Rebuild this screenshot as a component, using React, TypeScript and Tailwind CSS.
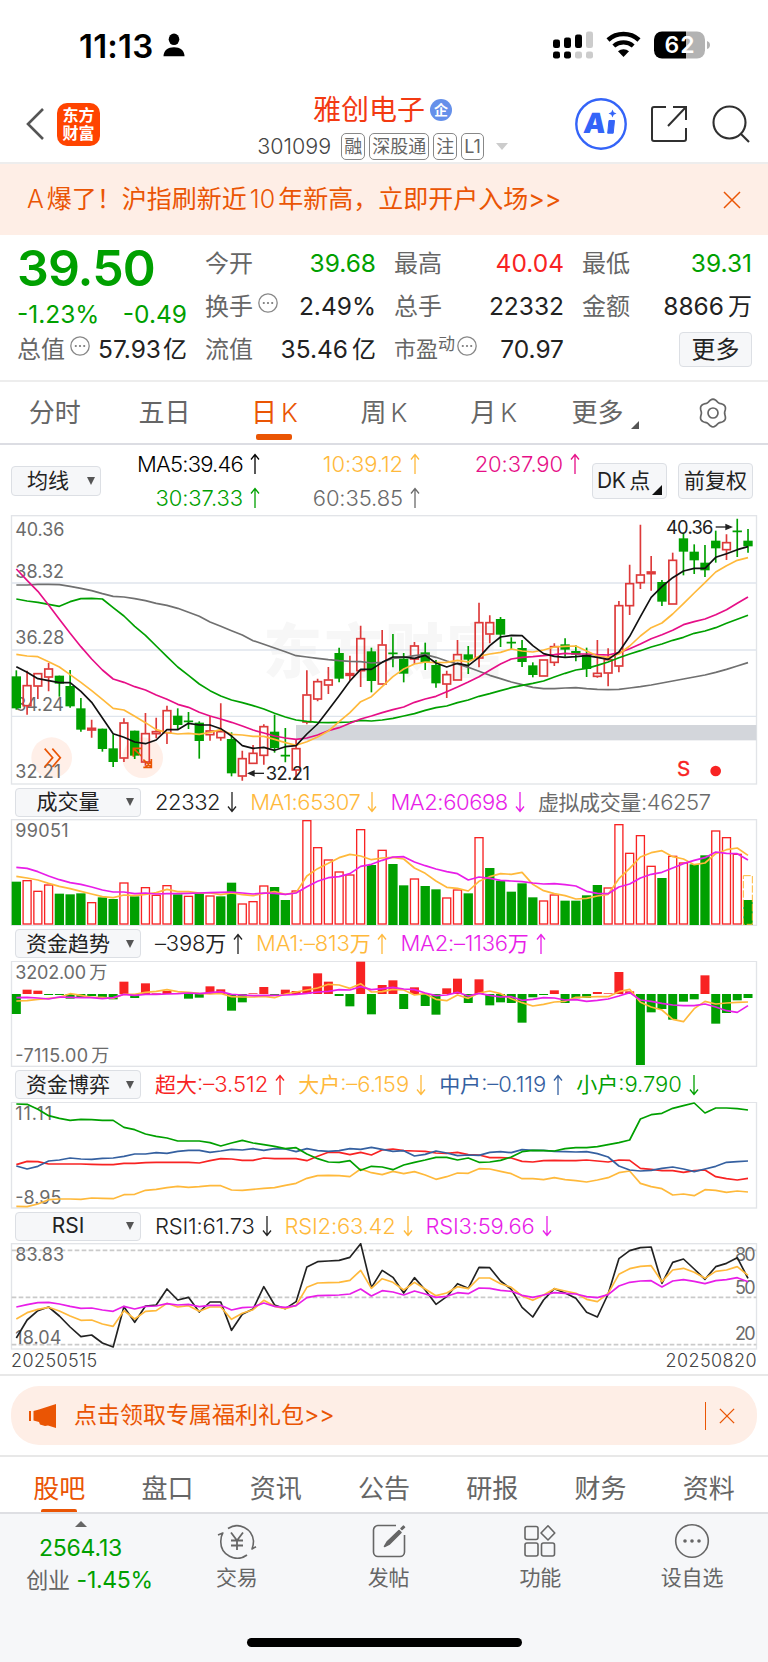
import type { ReactNode } from "react";
import clsx from "clsx";

type Candle = [dir: "r" | "g" | "x", top: number, bottom: number, high: number, low: number];

const UP = "#dd3a3a";
const DOWN = "#00a000";
const RED = "#f82323";
const YELLOW = "#ffb93b";
const MAGENTA = "#e81ee8";
const PINK = "#e60f87";
const GRAY = "#6b6b6b";
const BLUE = "#3560a0";

// chart drawings use three units per pixel
const X0 = 49;
const STEP = 32.28;
const px = (i: number) => X0 + i * STEP;

const candles: Candle[] = [
  ["g", 529, 625, 511, 629], ["r", 556, 618, 512, 644], ["r", 520, 559, 520, 597], ["r", 506, 532, 489, 574],
  ["g", 527, 551, 527, 590], ["g", 558, 619, 510, 623], ["g", 625, 689, 594, 695], ["r", 684, 691, 659, 713],
  ["g", 686, 747, 686, 755], ["g", 745, 786, 703, 801], ["r", 668, 775, 655, 786], ["g", 692, 767, 692, 777],
  ["r", 700, 787, 639, 797], ["r", 694, 702, 653, 715], ["r", 631, 699, 617, 732], ["g", 647, 675, 625, 690],
  ["x", 664, 664, 636, 687], ["g", 668, 723, 664, 776], ["r", 692, 705, 647, 722], ["r", 694, 714, 610, 722],
  ["g", 717, 820, 697, 829], ["r", 775, 829, 752, 842], ["r", 759, 791, 735, 791], ["r", 679, 767, 673, 794],
  ["g", 695, 744, 644, 758], ["x", 767, 767, 684, 787], ["r", 745, 811, 720, 838], ["r", 584, 667, 511, 673],
  ["r", 544, 598, 536, 604], ["r", 539, 556, 501, 582], ["g", 459, 536, 443, 547], ["r", 520, 527, 467, 542],
  ["r", 415, 513, 377, 561], ["g", 454, 543, 443, 577], ["r", 434, 553, 390, 553], ["x", 460, 460, 402, 502],
  ["g", 476, 521, 459, 547], ["r", 437, 478, 426, 492], ["g", 457, 486, 428, 510], ["g", 495, 550, 480, 563],
  ["r", 523, 553, 512, 594], ["r", 463, 541, 420, 541], ["g", 463, 479, 438, 522], ["r", 367, 475, 308, 502],
  ["r", 367, 403, 346, 430], ["g", 357, 404, 351, 441], ["x", 428, 428, 412, 447], ["g", 444, 486, 420, 501],
  ["g", 496, 525, 487, 532], ["r", 479, 529, 479, 529], ["r", 439, 488, 430, 498], ["g", 433, 449, 415, 470],
  ["g", 453, 464, 436, 484], ["g", 464, 507, 443, 531], ["r", 519, 530, 420, 533], ["r", 478, 520, 445, 559],
  ["r", 316, 499, 303, 517], ["r", 250, 318, 194, 345], ["r", 224, 249, 74, 267], ["r", 215, 222, 168, 272],
  ["g", 246, 305, 240, 318], ["r", 180, 313, 158, 313], ["g", 115, 155, 98, 226], ["g", 155, 181, 133, 222],
  ["g", 188, 211, 135, 231], ["g", 122, 145, 92, 188], ["r", 127, 150, 103, 180], ["x", 94, 94, 56, 171],
  ["g", 122, 139, 87, 158],
];

const ma5 = [500, 517, 536, 542, 548, 548, 574, 607, 654, 701, 712, 726, 731, 720, 689, 689, 670, 675, 675, 686, 708, 737, 745, 742, 751, 740, 737, 702, 672, 630, 587, 543, 508, 508, 487, 471, 471, 475, 466, 489, 501, 490, 497, 472, 437, 411, 406, 407, 437, 461, 469, 472, 470, 467, 472, 478, 456, 409, 350, 292, 260, 233, 213, 205, 205, 172, 161, 149, 140];
const ma10 = [463, 468, 470, 485, 501, 524, 547, 572, 598, 625, 630, 649, 668, 689, 698, 702, 700, 703, 697, 689, 703, 705, 709, 709, 718, 728, 736, 725, 711, 693, 665, 638, 605, 590, 560, 530, 507, 492, 486, 488, 487, 481, 486, 469, 462, 457, 447, 453, 456, 450, 441, 439, 438, 453, 468, 472, 462, 438, 408, 383, 369, 342, 311, 279, 248, 216, 197, 181, 173];
const ma20 = [207, 241, 274, 315, 358, 400, 440, 477, 510, 537, 547, 560, 570, 585, 598, 613, 622, 637, 648, 657, 667, 678, 690, 699, 708, 714, 718, 714, 705, 692, 683, 670, 657, 648, 638, 629, 621, 607, 597, 589, 575, 561, 546, 530, 511, 492, 477, 472, 470, 467, 464, 460, 462, 462, 464, 465, 458, 446, 432, 416, 404, 391, 374, 365, 357, 344, 329, 310, 291];
const ma30 = [297, 303, 307, 313, 319, 305, 296, 295, 297, 323, 348, 379, 406, 438, 470, 501, 526, 552, 572, 588, 600, 608, 617, 627, 640, 651, 660, 664, 667, 668, 667, 666, 661, 663, 660, 655, 648, 641, 631, 623, 618, 608, 600, 589, 581, 572, 563, 556, 550, 543, 531, 520, 510, 505, 496, 486, 473, 462, 452, 441, 432, 421, 412, 400, 393, 383, 370, 358, 346];
const ma60 = [255, 255, 253, 253, 254, 259, 265, 272, 281, 289, 291, 296, 302, 310, 316, 325, 337, 349, 366, 379, 392, 405, 422, 433, 444, 455, 467, 471, 475, 479, 482, 484, 485, 489, 487, 475, 472, 467, 464, 472, 483, 492, 502, 514, 526, 536, 546, 554, 562, 566, 566, 564, 563, 566, 568, 569, 568, 564, 560, 555, 549, 543, 537, 531, 525, 517, 508, 498, 488];

const volume = "g305 r301 r333 r314 g341 g343 g340 r367 g352 g357 r308 g349 r322 r345 r316 g343 r348 g340 r347 g349 g308 r371 r364 r317 g321 g360 r332 r121 r202 r239 r275 r284 r148 g255 r210 g252 g316 r296 g318 g328 r353 r329 g340 r172 g264 g302 g335 g310 g352 r362 r344 g362 g362 g346 g315 r323 r133 r219 r166 r258 g294 r228 r248 g253 g226 r152 r172 r222 g360".split(" ");
const volMa1 = [289, 294, 300, 310, 319, 326, 334, 342, 350, 353, 345, 347, 343, 338, 328, 335, 335, 339, 339, 344, 339, 344, 347, 340, 335, 343, 338, 288, 266, 250, 233, 223, 228, 239, 234, 232, 237, 264, 280, 303, 322, 325, 333, 304, 290, 281, 283, 277, 313, 332, 341, 347, 357, 355, 348, 343, 296, 265, 231, 218, 212, 230, 237, 254, 249, 221, 209, 204, 226];
const volMa2 = [262, 265, 275, 288, 299, 308, 313, 321, 330, 336, 336, 341, 339, 342, 341, 341, 340, 339, 338, 337, 336, 339, 342, 339, 340, 343, 339, 320, 304, 293, 290, 281, 259, 253, 241, 231, 230, 246, 257, 267, 275, 281, 300, 291, 295, 301, 303, 305, 309, 312, 311, 314, 318, 334, 340, 341, 321, 312, 294, 283, 277, 264, 251, 241, 233, 216, 220, 221, 240];

const fund = [702, 629, 632, 645, 645, 656, 653, 648, 654, 658, 605, 654, 610, 640, 633, 640, 656, 653, 619, 628, 692, 667, 640, 621, 646, 629, 633, 619, 580, 605, 648, 679, 545, 703, 615, 601, 687, 622, 678, 704, 625, 596, 669, 598, 676, 667, 669, 728, 652, 645, 631, 669, 655, 654, 636, 640, 576, 634, 855, 697, 687, 719, 665, 658, 586, 731, 699, 661, 654];
const fundMa1 = [663, 662, 658, 655, 652, 641, 646, 652, 652, 655, 643, 643, 637, 634, 629, 635, 637, 640, 642, 640, 650, 651, 651, 649, 653, 642, 636, 630, 624, 613, 615, 625, 611, 636, 635, 628, 630, 645, 641, 658, 662, 645, 655, 639, 633, 641, 656, 668, 678, 673, 666, 664, 652, 651, 650, 650, 635, 628, 667, 681, 690, 718, 725, 686, 664, 672, 669, 667, 666];
const fundMa2 = [653, 652, 654, 657, 651, 652, 653, 653, 656, 653, 643, 646, 643, 643, 642, 641, 639, 641, 638, 635, 643, 645, 647, 646, 646, 645, 643, 640, 636, 634, 629, 630, 620, 629, 626, 622, 627, 629, 639, 647, 645, 637, 648, 640, 646, 651, 650, 661, 658, 653, 654, 660, 659, 664, 661, 657, 648, 638, 660, 664, 670, 675, 677, 677, 672, 681, 692, 697, 677];

const retail = [102, 103, 118, 137, 145, 151, 148, 149, 151, 151, 172, 179, 192, 199, 204, 213, 213, 213, 218, 228, 219, 211, 219, 224, 229, 236, 233, 252, 266, 276, 277, 272, 301, 289, 291, 299, 285, 277, 270, 262, 262, 270, 264, 277, 276, 271, 261, 245, 241, 242, 243, 236, 233, 233, 230, 224, 218, 210, 147, 134, 130, 115, 107, 99, 129, 114, 114, 116, 120];
const superLarge = [284, 274, 275, 282, 282, 282, 282, 283, 284, 284, 280, 280, 278, 277, 277, 277, 277, 279, 272, 266, 267, 271, 271, 264, 266, 266, 266, 272, 259, 247, 247, 254, 247, 255, 240, 237, 242, 243, 244, 249, 250, 247, 254, 255, 263, 263, 264, 274, 276, 272, 271, 272, 272, 270, 273, 276, 270, 271, 295, 298, 302, 302, 307, 302, 300, 320, 326, 330, 325];
const middle = [288, 297, 289, 273, 270, 264, 267, 268, 265, 264, 259, 252, 252, 248, 250, 244, 241, 241, 247, 243, 238, 240, 236, 241, 236, 237, 245, 236, 242, 244, 242, 236, 238, 232, 238, 244, 242, 258, 253, 243, 249, 257, 255, 256, 247, 245, 248, 239, 241, 241, 244, 245, 246, 245, 251, 261, 288, 300, 303, 301, 295, 291, 297, 305, 297, 289, 277, 275, 273];
const large = [409, 410, 402, 389, 387, 387, 388, 384, 385, 386, 374, 373, 361, 358, 353, 349, 352, 350, 347, 347, 360, 361, 358, 355, 353, 346, 340, 325, 317, 316, 317, 320, 297, 308, 314, 304, 311, 305, 315, 328, 320, 309, 310, 296, 297, 304, 311, 326, 326, 329, 323, 329, 332, 336, 330, 323, 308, 303, 340, 350, 356, 375, 372, 377, 359, 361, 367, 363, 366];

const rsi1 = [804, 750, 722, 711, 738, 771, 800, 795, 819, 831, 710, 757, 708, 705, 657, 690, 682, 726, 696, 696, 781, 733, 717, 650, 705, 716, 695, 591, 575, 573, 571, 562, 521, 653, 601, 622, 669, 623, 660, 703, 680, 641, 655, 592, 593, 633, 658, 712, 741, 690, 656, 669, 685, 727, 741, 672, 566, 542, 533, 531, 640, 577, 567, 597, 628, 590, 580, 563, 625];
const rsi2 = [747, 728, 718, 712, 723, 738, 751, 750, 762, 769, 722, 747, 724, 722, 700, 711, 707, 724, 711, 711, 748, 730, 719, 691, 709, 716, 706, 652, 639, 638, 637, 631, 601, 655, 626, 637, 660, 637, 657, 677, 669, 650, 656, 624, 624, 641, 652, 678, 691, 675, 656, 663, 670, 688, 695, 670, 613, 596, 589, 587, 635, 600, 595, 607, 625, 604, 600, 590, 616];
const rsi3 = [711, 704, 698, 697, 702, 709, 715, 714, 720, 724, 709, 717, 709, 708, 701, 705, 703, 710, 706, 706, 720, 713, 711, 699, 709, 712, 707, 683, 677, 676, 675, 672, 657, 678, 662, 666, 675, 663, 672, 682, 679, 668, 671, 654, 655, 661, 664, 676, 682, 675, 668, 670, 672, 680, 683, 674, 648, 637, 633, 632, 651, 633, 629, 634, 641, 632, 629, 623, 635];

// six soft lobes, one pointing up
const gear = Array.from({ length: 72 }, (_, i) => {
  const a = (i * 5 * Math.PI) / 180;
  const r = 12.7 + 1.1 * Math.cos(6 * a);
  return `${(15 + r * Math.sin(a)).toFixed(2)},${(15 - r * Math.cos(a)).toFixed(2)}`;
}).join(" ");

function Line({ data, color }: { data: number[]; color: string }) {
  return (
    <polyline
      points={data.map((y, i) => `${px(i).toFixed(1)},${y}`).join(" ")}
      fill="none"
      stroke={color}
      strokeWidth={5}
      strokeLinejoin="round"
    />
  );
}

function Label({ x, y, w, children, color = GRAY }: { x: number; y: number; w: number; children: string; color?: string }) {
  return (
    <text x={x} y={y} fontSize={54} fill={color} textLength={w}>
      {children}
    </text>
  );
}

function Frame({ top, bottom }: { top: number; bottom: number }) {
  return <rect x={34.5} y={top} width={2235} height={bottom - top} fill="none" stroke="#e2e4e8" strokeWidth={4} />;
}

function Arrow({ up = false }: { up?: boolean }) {
  return (
    <svg viewBox="0 0 10 22" className={clsx("ml-[7px] h-[22px] w-[10px] shrink-0", !up && "rotate-180")}>
      <path d="M5 21V1.5M1 6.5 5 1.5l4 5" fill="none" stroke="currentColor" strokeWidth={1.3} />
    </svg>
  );
}

function Dots() {
  return (
    <svg viewBox="0 0 20 20" className="ml-[5px] h-5 w-5 shrink-0 -translate-y-1">
      <circle cx={10} cy={10} r={9.2} fill="none" stroke="#888" strokeWidth={1.3} />
      <circle cx={5.8} cy={10} r={1.1} fill="#777" />
      <circle cx={10} cy={10} r={1.1} fill="#777" />
      <circle cx={14.2} cy={10} r={1.1} fill="#777" />
    </svg>
  );
}

function IndicatorRow({ name, className, children }: { name: string; className: string; children: ReactNode }) {
  return (
    <div className={clsx("flex items-center pl-[15px] text-[22px] font-light", className)}>
      <div className="mr-[14px] flex h-[29px] w-[126px] shrink-0 items-center rounded border border-[#dcdfe4] bg-[#f6f7f9] text-[21px] font-normal tracking-normal text-[#222]">
        <span className="w-[104px] text-center">{name}</span>
        <svg viewBox="0 0 8 8" className="ml-[6px] h-2 w-2">
          <path d="M0 0h8L4 8z" fill="#555" />
        </svg>
      </div>
      <div className="flex items-center gap-[13px] whitespace-nowrap">{children}</div>
    </div>
  );
}

function Item({ color, up, children }: { color: string; up?: boolean; children: ReactNode }) {
  return (
    <span className={clsx("flex items-center", color)}>
      {children}
      <Arrow up={up} />
    </span>
  );
}

function Zh({ children }: { children: string }) {
  return <span className="text-[21px] font-normal">{children}</span>;
}

function Close({ className }: { className: string }) {
  return (
    <svg viewBox="0 0 18 18" className={className}>
      <path d="M1 1l16 16M17 1 1 17" stroke="#ea5504" strokeWidth={1.5} />
    </svg>
  );
}

function StatusBar() {
  return (
    <div className="flex h-[90px] items-center">
      <span className="ml-[79px] w-[76px] whitespace-nowrap pt-[2px] text-[33px] font-semibold leading-none tracking-[0.2px] text-black">11:13</span>
      <svg viewBox="0 0 22 24" className="ml-2 h-6 w-[22px]">
        <ellipse cx={11} cy={6.3} rx={5.3} ry={5.8} />
        <path d="M.5 23.3C.5 17.5 5 14.3 11 14.3s10.5 3.2 10.5 9z" />
      </svg>
      <svg viewBox="0 0 160 28" className="ml-[367px] h-7 w-[160px]">
        <g fill="#000">
          <rect x={1} y={8.5} width={7} height={8.5} rx={2.2} />
          <rect x={12} y={6.5} width={7} height={10.5} rx={2.2} />
          <rect x={23} y={3.5} width={7} height={13.5} rx={2.2} />
          <rect x={1} y={20.5} width={7} height={7} rx={2.2} />
          <rect x={12} y={20.5} width={7} height={7} rx={2.2} />
        </g>
        <g fill="#ccc">
          <rect x={34} y={0.5} width={7} height={16.5} rx={2.2} />
          <rect x={23} y={20.5} width={7} height={7} rx={2.2} />
          <rect x={34} y={20.5} width={7} height={7} rx={2.2} />
        </g>
        <path d="M56 8.900a23.500 23.500 0 0 1 31 0" fill="none" stroke="#000" strokeWidth={4.6} />
        <path d="M61.800 15a14.800 14.800 0 0 1 19.400 0" fill="none" stroke="#000" strokeWidth={4.3} />
        <path d="M66 20.200a8.800 8.800 0 0 1 11 0L71.500 26z" fill="#000" />
        <path d="M110 .5h24v27h-24a8 8 0 0 1-8-8V8.500a8 8 0 0 1 8-8z" fill="#000" />
        <path d="M134 .5h11a8 8 0 0 1 8 8v11a8 8 0 0 1-8 8h-11z" fill="#b3b3b3" />
        <path d="M155 10c4 1.200 4 7 0 8z" fill="#b3b3b3" />
        <text x={112.5} y={22} fontSize={23} fontWeight={600} fill="#fff" textLength={30}>62</text>
      </svg>
    </div>
  );
}

function Tag({ children }: { children: string }) {
  return <span className="flex h-[27px] items-center rounded-[5px] border border-[#888] px-[2px] text-[18px] leading-none text-[#666]">{children}</span>;
}

function Header() {
  return (
    <header className="flex h-[74px] border-b-2 border-[#ededed]">
      <div className="flex w-[257px] items-center pl-[26px] pb-1">
        <svg viewBox="0 0 18 32" className="h-8 w-[18px]">
          <path d="M17 1 2 16l15 15" fill="none" stroke="#555" strokeWidth={2.6} />
        </svg>
        <div className="ml-[13px] flex h-[43px] w-[43px] flex-col items-center justify-center rounded-[10px] bg-[#ff4400] text-[16px] font-bold leading-[18px] text-white">
          <span>东方</span>
          <span>财富</span>
        </div>
      </div>
      <div className="flex w-[251px] flex-col items-center">
        <div className="flex h-[38px] items-center pt-px">
          <span className="text-[28px] leading-none text-[#f33a12]">雅创电子</span>
          <span className="ml-[5px] flex h-[22px] w-[22px] items-center justify-center rounded-full bg-[#6590ea] text-[14px] font-bold leading-none text-white">企</span>
        </div>
        <div className="mt-[5px] flex items-center gap-1">
          <span className="mr-[3px] w-[77px] whitespace-nowrap text-[21.5px] font-light leading-none text-[#444]">301099</span>
          <Tag>融</Tag>
          <Tag>深股通</Tag>
          <Tag>注</Tag>
          <Tag>L1</Tag>
          <svg viewBox="0 0 12 7" className="ml-2 h-[7px] w-3">
            <path d="M0 0h12L6 7z" fill="#ccc" />
          </svg>
        </div>
      </div>
      <div className="flex flex-1 items-center pb-1 pl-[67px]">
        <svg viewBox="0 0 52 52" className="h-[52px] w-[52px]">
          <circle cx={26} cy={26} r={24.7} fill="none" stroke="#3464f8" strokeWidth={2.4} />
          <text x={7.5} y={35.5} fontSize={28} fontWeight={900} fill="#3464f8" transform="skewX(-6) translate(4 0)">A</text>
          <path d="M34 22.500h5.500l-1.300 12.700h-5.500z" fill="#3464f8" stroke="#3464f8" strokeLinejoin="round" />
          <path d="M37.500 11.500l1.200 2.800 2.800 1.200-2.800 1.200-1.200 2.800-1.200-2.800-2.800-1.200 2.800-1.200z" fill="#3464f8" />
        </svg>
        <svg viewBox="0 0 36 36" className="ml-[24px] h-9 w-9" fill="none" stroke="#303030" strokeWidth={2}>
          <path d="M15 1H3a2 2 0 0 0-2 2v30a2 2 0 0 0 2 2h30a2 2 0 0 0 2-2V22M22 1h13v13M35 1 17 20" />
        </svg>
        <svg viewBox="0 0 38 38" className="ml-[25px] h-[38px] w-[38px]" fill="none" stroke="#303030" strokeWidth={2.1}>
          <circle cx={17.5} cy={17.5} r={16} />
          <path d="m29 29 8 8" />
        </svg>
      </div>
    </header>
  );
}

function Quote({ label, value, color = "text-[#222]", extra }: { label: string; value: ReactNode; color?: string; extra?: ReactNode }) {
  return (
    <div className="flex h-[43px] items-center whitespace-nowrap">
      <span className="text-[24px] text-[#666]">{label}</span>
      {extra}
      <span className={clsx("ml-auto text-[24.5px]", color)}>{value}</span>
    </div>
  );
}

const unit = "ml-[4px] text-[24px]";

function QuotePanel() {
  return (
    <section className="flex h-[147px] gap-[18px] border-b-2 border-[#ededed] pl-[17px] pt-[7px]">
      <div className="w-[170px]">
        <div className="h-[57px] text-[50px] font-semibold leading-[52px] tracking-[-0.9px] text-[#00a000]">39.50</div>
        <div className="flex h-[29px] items-center justify-between pt-px text-[24.5px] leading-none text-[#00a000]">
          <span>-1.23%</span>
          <span>-0.49</span>
        </div>
        <Quote label="总值" extra={<Dots />} value={<>57.93<span className="ml-[2px] text-[24px]">亿</span></>} />
      </div>
      <div className="w-[171px]">
        <Quote label="今开" value="39.68" color="text-[#00a000]" />
        <Quote label="换手" extra={<Dots />} value="2.49%" />
        <Quote label="流值" value={<>35.46<span className={unit}>亿</span></>} />
      </div>
      <div className="w-[170px]">
        <Quote label="最高" value="40.04" color="text-[#f82323]" />
        <Quote label="总手" value="22332" />
        <div className="flex h-[43px] items-center text-[24.5px]">
          <span className="text-[22px] text-[#666]">市盈</span>
          <span className="-translate-y-[5px] text-[17px] text-[#666]">动</span>
          <span className="-ml-[3px]"><Dots /></span>
          <span className="ml-auto text-[#222]">70.97</span>
        </div>
      </div>
      <div className="w-[170px]">
        <Quote label="最低" value="39.31" color="text-[#00a000]" />
        <Quote label="金额" value={<>8866<span className={unit}>万</span></>} />
        <div className="flex h-[43px] items-center justify-end">
          <button className="h-[35px] w-[73px] rounded border border-[#dcdfe4] bg-[#f6f7f9] text-[24px] leading-none text-[#222]">更多</button>
        </div>
      </div>
    </section>
  );
}

function PeriodTabs() {
  const tabs = ["分时", "五日", "日K", "周K", "月K", "更多"];
  return (
    <nav className="flex h-[63px] border-b-2 border-[#dcdde3] text-[26px] text-[#666]">
      {tabs.map((t) => (
        <div key={t} className={clsx("relative flex flex-1 items-center justify-center", t === "日K" && "text-[#ea5504]")}>
          {t.endsWith("K") ? <>{t[0]}<span className="ml-1 font-light">K</span></> : t === "更多" ? <span className="ml-1">{t}</span> : t}
          {t === "日K" && <span className="absolute bottom-[3px] h-[6px] w-[36px] rounded-[2px] bg-[#ea5504]" />}
          {t === "更多" && (
            <svg viewBox="0 0 8 8" className="ml-2 mt-6 h-2 w-2">
              <path d="M8 0v8H0z" fill="#555" />
            </svg>
          )}
        </div>
      ))}
      <div className="flex flex-1 items-center justify-center">
        <svg viewBox="0 0 30 30" className="h-[30px] w-[30px]" fill="none" stroke="#666" strokeWidth={1.7}>
          <polygon points={gear} />
          <circle cx={15} cy={15} r={5} />
        </svg>
      </div>
    </nav>
  );
}

function MaRow() {
  return (
    <div className="flex h-[70px] pl-[11px] text-[21px] font-light">
      <div className="mt-[21px] flex h-[30px] w-[90px] items-center rounded border border-[#dcdfe4] bg-[#f6f7f9] pl-[15px] font-normal text-[#222]">
        均线
        <svg viewBox="0 0 8 8" className="ml-[18px] h-2 w-2">
          <path d="M0 0h8L4 8z" fill="#555" />
        </svg>
      </div>
      <div className="grid w-[479px] grid-cols-[159px_160px_160px] grid-rows-[34px_34px] justify-items-end pt-[2px] text-[22px] tracking-[-0.1px]">
        <Item up color="text-black tracking-[-0.8px]">MA5:39.46</Item>
        <Item up color="text-[#ffb93b]">10:39.12</Item>
        <Item up color="text-[#e60f87]">20:37.90</Item>
        <Item up color="text-[#00a000]">30:37.33</Item>
        <Item up color="text-[#6b6b6b]">60:35.85</Item>
      </div>
      <div className="relative ml-3 mt-[18px] flex h-[36px] w-[75px] items-center rounded border border-[#dcdfe4] bg-[#f6f7f9] pl-[4px] font-normal text-[#222]">
        <span className="tracking-[-0.5px]">DK</span><span className="ml-1">点</span>
        <svg viewBox="0 0 10 10" className="absolute bottom-[3px] right-1 h-[10px] w-[10px]">
          <path d="M10 0v10H0z" fill="#111" />
        </svg>
      </div>
      <div className="ml-[11px] mt-[18px] flex h-[36px] w-[75px] items-center justify-center rounded border border-[#dcdfe4] bg-[#f6f7f9] font-normal text-[#222]">前复权</div>
    </div>
  );
}

function KChart() {
  return (
    <svg viewBox="0 45 2304 810" className="block h-[270px] w-full">
      <text x={790} y={520} fontSize={176} fontWeight={900} fill="#f7f7f7" textLength={725}>东方财富</text>
      <Frame top={47} bottom={852} />
      {[249, 450, 649].map((y) => (
        <path key={y} d={`M35 ${y}H2269`} stroke="#dfe5ec" strokeWidth={4} />
      ))}
      <circle cx={155} cy={773} r={61} fill="#ffefe8" />
      <circle cx={428} cy={773} r={61} fill="#ffefe8" />
      <rect x={888} y={675} width={1381} height={46} fill="#d3d6db" />
      <Label x={46} y={107} w={147}>40.36</Label>
      <Label x={46} y={233} w={146}>38.32</Label>
      <Label x={46} y={433} w={147}>36.28</Label>
      <Label x={46} y={633} w={146}>34.24</Label>
      <Label x={46} y={835} w={137}>32.21</Label>
      {candles.map(([dir, top, bottom, high, low], i) => {
        const x = px(i);
        if (dir === "x") return <path key={i} d={`M${x} ${high}V${low}M${x - 14} ${top}h28`} stroke={DOWN} strokeWidth={5} />;
        if (dir === "g")
          return (
            <g key={i}>
              <path d={`M${x} ${high}V${low}`} stroke={DOWN} strokeWidth={5} />
              <rect x={x - 14} y={top} width={28} height={bottom - top} fill={DOWN} />
            </g>
          );
        return (
          <g key={i} stroke={UP} strokeWidth={5} fill="none">
            <path d={`M${x} ${high}V${top}M${x} ${bottom}V${low}`} />
            <rect x={x - 11.5} y={top + 1} width={23} height={bottom - top - 2} />
          </g>
        );
      })}
      <Line data={ma60} color="#707070" />
      <Line data={ma30} color={DOWN} />
      <Line data={ma20} color={PINK} />
      <Line data={ma10} color={YELLOW} />
      <Line data={ma5} color="#111" />
      <g stroke="#222" strokeWidth={4} fill="#222">
        <path d="M756 820h36" />
        <path d="M746 820l16-7v14z" />
        <path d="M2147 81h34" />
        <path d="M2194 81l-16-7v14z" />
      </g>
      <text x={797} y={840} fontSize={55} fill="#222" textLength={133}>32.21</text>
      <text x={1998} y={101} fontSize={55} fill="#222" textLength={142}>40.36</text>
      <g fill="none" stroke="#ea5504" strokeWidth={5}>
        <path d="M134 746l24 27-24 28M157 746l24 27-24 28" />
        <path d="M424 768l-24-23M400 770v-25h26" />
        <path d="M430 779l24 22M454 777v25h-24M436 802l18-18" />
      </g>
      <text x={2031} y={827} fontSize={62} fill={RED} stroke={RED} strokeWidth={1}>S</text>
      <circle cx={2147} cy={813} r={16} fill={RED} />
    </svg>
  );
}

function VolumeChart() {
  return (
    <svg viewBox="0 117 2304 321" className="block h-[107px] w-full">
      <Frame top={119} bottom={436} />
      <Label x={46} y={172} w={160}>99051</Label>
      {volume.map((v, i) => {
        const top = Number(v.slice(1));
        return v[0] === "g" ? (
          <rect key={i} x={px(i) - 14} y={top} width={28} height={435 - top} fill={DOWN} />
        ) : (
          <rect key={i} x={px(i) - 12} y={top + 1} width={24} height={431 - top} fill="none" stroke={RED} strokeWidth={4} />
        );
      })}
      <rect x={px(68) - 14} y={287} width={27} height={146} fill="none" stroke={YELLOW} strokeWidth={3} strokeDasharray="22 6" />
      <Line data={volMa1} color={YELLOW} />
      <Line data={volMa2} color={MAGENTA} />
    </svg>
  );
}

function FundChart() {
  return (
    <svg viewBox="0 543 2304 318" className="block h-[106px] w-full">
      <Frame top={544} bottom={859} />
      <Label x={46} y={596} w={212}>3202.00</Label>
      <Label x={268} y={596} w={48}>万</Label>
      <Label x={46} y={847} w={218}>-7115.00</Label>
      <Label x={274} y={847} w={48}>万</Label>
      {fund.map((y, i) => (
        <rect key={i} x={px(i) - 13.5} y={Math.min(y, 642)} width={27} height={Math.abs(y - 642)} fill={y < 642 ? RED : DOWN} />
      ))}
      <Line data={fundMa1} color={YELLOW} />
      <Line data={fundMa2} color={MAGENTA} />
    </svg>
  );
}

function GameChart() {
  return (
    <svg viewBox="0 96 2304 321" className="block h-[107px] w-full">
      <Frame top={97} bottom={414} />
      <Label x={46} y={149} w={110}>11.11</Label>
      <Label x={46} y={401} w={138}>-8.95</Label>
      <Line data={large} color={YELLOW} />
      <Line data={superLarge} color={RED} />
      <Line data={middle} color={BLUE} />
      <Line data={retail} color={DOWN} />
    </svg>
  );
}

function RsiChart() {
  return (
    <svg viewBox="0 519 2304 321" className="block h-[107px] w-full">
      <Frame top={521} bottom={837} />
      {[541, 682, 824].map((y) => (
        <path key={y} d={`M35 ${y}H2269`} stroke="#cacaca" strokeWidth={5} strokeDasharray="14 7" />
      ))}
      <Label x={46} y={573} w={146}>83.83</Label>
      <Label x={46} y={823} w={138}>18.04</Label>
      <Label x={2205} y={573} w={62}>80</Label>
      <Label x={2205} y={672} w={62}>50</Label>
      <Label x={2205} y={811} w={62}>20</Label>
      <Line data={rsi1} color="#222" />
      <Line data={rsi2} color={YELLOW} />
      <Line data={rsi3} color={MAGENTA} />
    </svg>
  );
}

function PromoBar() {
  return (
    <section className="h-[83px] border-y-2 border-[#e8e8e8] px-[11px] pt-[10px]">
      <div className="flex h-[59px] items-center rounded-[28px] bg-[#feeee6] pl-[18px] pr-[22px] text-[#ea5504]">
        <svg viewBox="0 0 28 24" className="h-6 w-7" fill="#ea5504">
          <rect x={0} y={7} width={2} height={10} />
          <path d="M4.500 7 10 5.500 27 0v24l-8-2.600-3 .6-5-1.500-1-2.500-5.500-1.500z" />
        </svg>
        <span className="ml-[17px] text-[23px]">点击领取专属福利礼包&gt;&gt;</span>
        <span className="ml-auto h-7 w-[1.5px] bg-[#ea5504]" />
        <Close className="ml-[13px] h-4 w-4" />
      </div>
    </section>
  );
}

function InfoTabs() {
  const tabs = ["股吧", "盘口", "资讯", "公告", "研报", "财务", "资料"];
  return (
    <nav className="flex h-[57px] border-b-2 border-[#dedfe3] px-[5px] text-[26px] text-[#666]">
      {tabs.map((t, i) => (
        <div key={t} className={clsx("relative flex flex-1 items-center justify-center pt-[7px]", i === 0 && "text-[#ea5504]")}>
          {t}
          {i === 0 && <span className="absolute bottom-0 h-[3px] w-[36px] rounded-t-[2px] bg-[#ea5504]" />}
        </div>
      ))}
    </nav>
  );
}

function Action({ label, children }: { label: string; children: ReactNode }) {
  return (
    <div className="flex flex-1 flex-col items-center pt-[9px]">
      <svg viewBox="0 0 40 36" className="h-9 w-10" fill="none" stroke="#666" strokeWidth={1.6} strokeLinejoin="round">
        {children}
      </svg>
      <span className="mt-[5px] text-[21px] leading-[28px] text-[#666]">{label}</span>
    </div>
  );
}

function BottomBar() {
  return (
    <footer className="h-[148px] bg-[#f6f7f9]">
      <div className="flex h-[124px]">
        <div className="flex w-[161px] flex-col items-center pt-[7px] text-[23px] text-[#00a000]">
          <svg viewBox="0 0 12 6" className="h-[6px] w-3">
            <path d="M0 6h12L6 0z" fill="#666" />
          </svg>
          <span className="mt-[7px] leading-[28px] tracking-[-0.2px]">2564.13</span>
          <span className="ml-[18px] mt-[3px] whitespace-nowrap leading-[30px] tracking-[-0.3px]">
            <span className="mr-[7px] text-[22px] text-[#666]">创业</span>-1.45%
          </span>
        </div>
        <Action label="交易">
          <path d="M11 5.500A16.500 16.500 0 0 1 36.500 18c0 3-.5 5.500-1.500 8l4-2.300M30 32A16.500 16.500 0 0 1 3.800 18c0-3 .5-5.500 2-8L1 12" />
          <path d="M14 9.500l6 8 6-8M14 17.500h12M14 22.500h12M20 17.500V27" strokeWidth={1.8} />
        </Action>
        <Action label="发帖">
          <path d="M27 2.500H9A4.500 4.500 0 0 0 4.500 7v22A4.500 4.500 0 0 0 9 33.500h22a4.500 4.500 0 0 0 4.500-4.500V12" />
          <path d="m15.500 23.500 3-5L30 7.500l2 2L20.500 21zM32 5.500l2.500-2.300 1 1-2.500 2.300z" fill="#666" />
        </Action>
        <Action label="功能">
          <rect x={5} y={3.5} width={13} height={13} rx={2} />
          <rect x={5} y={20} width={13} height={13} rx={2} />
          <rect x={21.5} y={20} width={13} height={13} rx={2} />
          <path d="M28 2.800 34.800 10 28 17 21 10z" />
        </Action>
        <Action label="设自选">
          <circle cx={20} cy={18} r={16.3} />
          <g fill="#666" stroke="none">
            <circle cx={13} cy={18} r={1.8} />
            <circle cx={20} cy={18} r={1.8} />
            <circle cx={27} cy={18} r={1.8} />
          </g>
        </Action>
      </div>
      <div className="mx-auto h-[9px] w-[275px] rounded-full bg-black" />
    </footer>
  );
}

export default function App() {
  return (
    <main className="h-[1662px] w-[768px] overflow-hidden bg-white font-[Inter,'Noto_Sans_CJK_SC',sans-serif]">
      <StatusBar />
      <Header />
      <div className="flex h-[71px] items-center justify-between bg-[#feeee6] pl-[27px] pr-[27px] text-[25px] text-[#ea5504]">
        <span className="whitespace-nowrap">
          <span className="font-light">A</span><span className="ml-[3px]">爆了！沪指刷新近</span>
          <span className="mx-[3px] font-light">10</span>年新高，立即开户入场&gt;&gt;
        </span>
        <Close className="h-[18px] w-[18px]" />
      </div>
      <QuotePanel />
      <PeriodTabs />
      <MaRow />
      <KChart />
      <IndicatorRow name="成交量" className="h-[34px] tracking-[-0.4px]">
        <Item color="text-[#222]">22332</Item>
        <Item color="text-[#ffb93b]">MA1:65307</Item>
        <Item color="text-[#e81ee8]">MA2:60698</Item>
        <span className="text-[#6b6b6b]"><Zh>虚拟成交量</Zh>:46257</span>
      </IndicatorRow>
      <VolumeChart />
      <IndicatorRow name="资金趋势" className="h-[35px] tracking-[-0.2px]">
        <Item up color="text-[#222]">–398<Zh>万</Zh></Item>
        <Item up color="text-[#ffb93b]">MA1:–813<Zh>万</Zh></Item>
        <Item up color="text-[#e81ee8]">MA2:–1136<Zh>万</Zh></Item>
      </IndicatorRow>
      <FundChart />
      <IndicatorRow name="资金博弈" className="h-[35px]">
        <Item up color="text-[#f82323]"><Zh>超大</Zh>:–3.512</Item>
        <Item color="text-[#ffb93b]"><Zh>大户</Zh>:–6.159</Item>
        <Item up color="text-[#3560a0]"><Zh>中户</Zh>:–0.119</Item>
        <Item color="text-[#00a000]"><Zh>小户</Zh>:9.790</Item>
      </IndicatorRow>
      <GameChart />
      <IndicatorRow name="RSI" className="h-[34px] tracking-[-0.2px]">
        <Item color="text-[#222]">RSI1:61.73</Item>
        <Item color="text-[#ffb93b]">RSI2:63.42</Item>
        <Item color="text-[#e81ee8]">RSI3:59.66</Item>
      </IndicatorRow>
      <RsiChart />
      <div className="flex h-6 items-center justify-between px-[11px] pb-1 text-[18px] font-light tracking-[0.4px] text-[#444]">
        <span>20250515</span>
        <span>20250820</span>
      </div>
      <PromoBar />
      <InfoTabs />
      <BottomBar />
    </main>
  );
}
